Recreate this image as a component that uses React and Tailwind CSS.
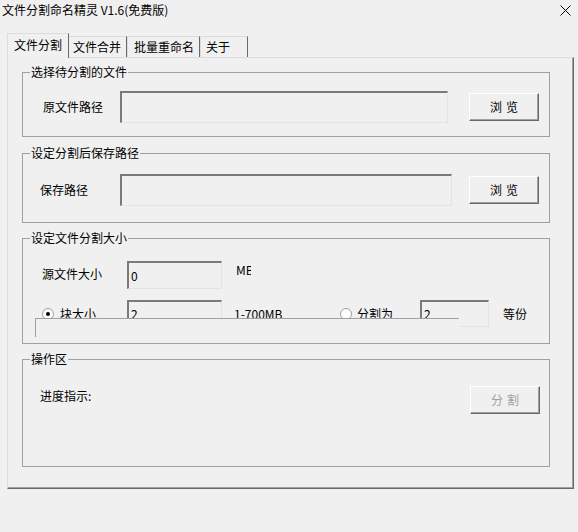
import React from 'react';

const font = { fontFamily: '"Noto Sans CJK SC", "Liberation Sans", sans-serif' };

function Group({ title, className, children }) {
  return (
    <div className={`relative w-[528px] border border-[#a0a0a0] ${className}`}>
      <span className="absolute -top-[8px] left-[7px] bg-[#f0f0f0] px-[1px] leading-[14px]">{title}</span>
      {children}
    </div>
  );
}

function Field({ className, value }) {
  return (
    <div
      className={`flex items-center border-t-2 border-l-2 border-r border-b border-t-[#7a7a7a] border-l-[#7a7a7a] border-r-[#e3e3e3] border-b-[#e3e3e3] bg-[#f0f0f0] pl-[2px] ${className}`}
    >
      {value}
    </div>
  );
}

function Button({ label, disabled, className }) {
  return (
    <button
      disabled={disabled}
      className={`w-[70px] h-[28px] flex items-center justify-center border border-t-white border-l-white border-r-[#696969] border-b-[#696969] bg-[#f0f0f0] shadow-[inset_-1px_-1px_0_#a0a0a0] tracking-[4px] pl-[4px] ${disabled ? 'text-[#a0a0a0]' : 'text-black'} ${className || ''}`}
    >
      {label}
    </button>
  );
}

function Radio({ checked }) {
  return (
    <span className="w-[12px] h-[12px] rounded-full border border-[#a0a0a0] bg-white flex items-center justify-center shrink-0">
      {checked && <span className="w-[4px] h-[4px] rounded-full bg-black" />}
    </span>
  );
}

export default function App() {
  return (
    <div className="w-[578px] h-[532px] bg-[#f0f0f0] text-[12px] leading-[14px] text-black overflow-hidden" style={font}>
      <div className="h-[20px] flex items-center justify-between pl-[2px] pr-[7px]">
        <span>文件分割命名精灵 V1.6(免费版)</span>
        <svg width="11" height="11" viewBox="0 0 11 11">
          <path d="M0.5 0.5 L10.5 10.5 M10.5 0.5 L0.5 10.5" stroke="#000" strokeWidth="1" />
        </svg>
      </div>

      <div className="mt-[13px] h-[24px] flex items-end pl-[7px] relative z-10">
        <div className="w-[62px] h-[25px] -mb-[1px] bg-[#f0f0f0] border-l border-t border-l-[#dcdcdc] border-t-[#dcdcdc] border-r border-r-[#696969] pl-[6px] pt-[4px]">文件分割</div>
        <div className="w-[58px] h-[21px] border-t border-t-[#dcdcdc] border-r border-r-[#696969] pl-[4px] pt-[3px]">文件合并</div>
        <div className="w-[73px] h-[21px] border-l border-t border-l-[#dcdcdc] border-t-[#dcdcdc] border-r border-r-[#696969] pl-[6px] pt-[3px]">批量重命名</div>
        <div className="w-[48px] h-[21px] border-l border-t border-l-[#dcdcdc] border-t-[#dcdcdc] border-r border-r-[#696969] pl-[5px] pt-[3px]">关于</div>
      </div>

      <div className="ml-[7px] w-[567px] h-[432px] border-l border-t border-l-[#dcdcdc] border-t-[#dcdcdc] border-r border-b border-r-[#696969] border-b-[#696969] shadow-[inset_-1px_-1px_0_#a0a0a0] pl-[14px] pt-[14px] flex flex-col">
        <Group title="选择待分割的文件" className="h-[65px]">
          <div className="pt-[18px] pl-[20px] flex items-center">
            <span className="w-[77px]">原文件路径</span>
            <Field className="w-[328px] h-[32px]" />
            <Button label="浏览" className="ml-[21px]" />
          </div>
        </Group>

        <Group title="设定分割后保存路径" className="h-[70px] mt-[16px]">
          <div className="pt-[20px] pl-[17px] flex items-center">
            <span className="w-[80px]">保存路径</span>
            <Field className="w-[332px] h-[32px]" />
            <Button label="浏览" className="ml-[17px]" />
          </div>
        </Group>

        <Group title="设定文件分割大小" className="h-[106px] mt-[15px]">
          <div className="pt-[22px] pl-[19px] flex items-start">
            <span className="w-[85px] mt-[6px]">源文件大小</span>
            <Field className="w-[95px] h-[28px]" value="0" />
            <span className="ml-[14px] mt-[2px] w-[15px] overflow-hidden whitespace-nowrap">MB</span>
          </div>
          <div className="mt-[11px] pl-[19px] flex items-center">
            <Radio checked />
            <span className="ml-[6px] w-[67px]">块大小</span>
            <Field className="w-[95px] h-[27px]" value="2" />
            <span className="ml-[12px] w-[106px]">1-700MB</span>
            <Radio />
            <span className="ml-[5px] w-[63px]">分割为</span>
            <Field className="w-[69px] h-[27px]" value="2" />
            <span className="ml-[14px]">等份</span>
          </div>
          <div className="absolute left-[12px] top-[79px] w-[424px] h-[19px] border-t border-l border-[#a0a0a0] bg-[#f0f0f0] z-10" />
        </Group>

        <Group title="操作区" className="h-[108px] mt-[15px]">
          <div className="pt-[26px] pl-[17px] pr-[9px] flex items-start justify-between">
            <span className="mt-[3px]">进度指示:</span>
            <Button label="分割" disabled />
          </div>
        </Group>
      </div>
    </div>
  );
}
